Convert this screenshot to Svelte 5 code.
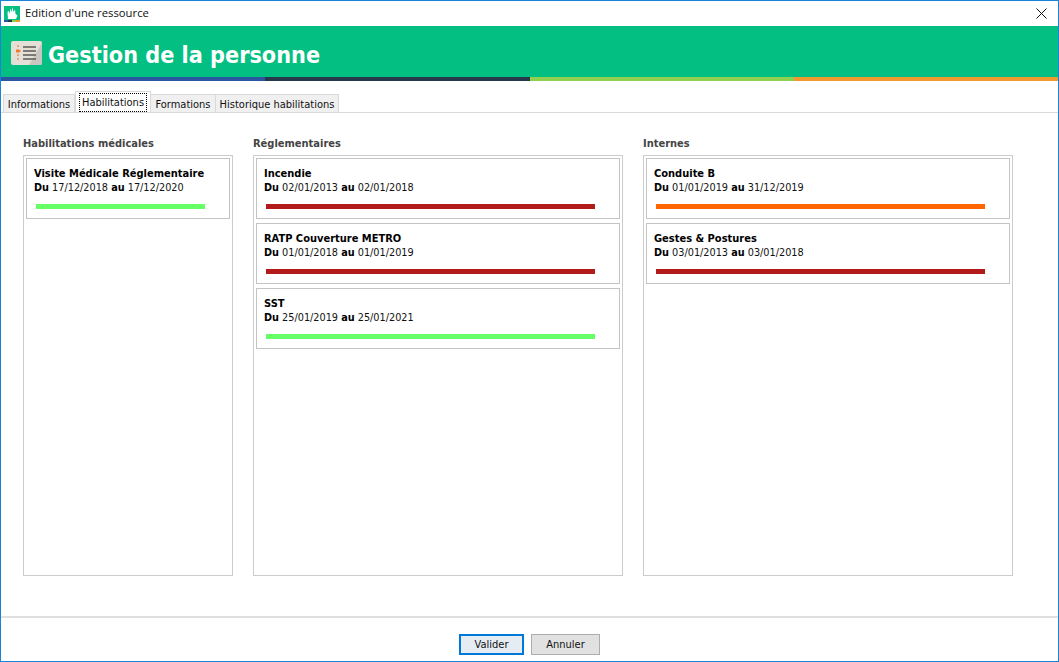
<script>
  const tabs = [
    { label: 'Informations', width: 72 },
    { label: 'Habilitations', width: 76, active: true },
    { label: 'Formations', width: 65 },
    { label: 'Historique habilitations', width: 123 }
  ]

  const columns = [
    {
      title: 'Habilitations médicales',
      items: [{ name: 'Visite Médicale Réglementaire', from: '17/12/2018', to: '17/12/2020', tone: 'ok' }]
    },
    {
      title: 'Réglementaires',
      items: [
        { name: 'Incendie', from: '02/01/2013', to: '02/01/2018', tone: 'expired' },
        { name: 'RATP Couverture METRO', from: '01/01/2018', to: '01/01/2019', tone: 'expired' },
        { name: 'SST', from: '25/01/2019', to: '25/01/2021', tone: 'ok' }
      ]
    },
    {
      title: 'Internes',
      items: [
        { name: 'Conduite B', from: '01/01/2019', to: '31/12/2019', tone: 'soon' },
        { name: 'Gestes & Postures', from: '03/01/2013', to: '03/01/2018', tone: 'expired' }
      ]
    }
  ]
</script>

<div class="window">
  <header class="titlebar">
    <svg class="app-icon" width="16" height="16" viewBox="0 0 16 16" aria-hidden="true">
      <rect width="16" height="16" fill="#04bf82" />
      <path d="M4 13L3.500 6 5 5l.5 3L6.500 2.500 7.500 6 8.500 1l1 5 1.500-2.500.5 4.500 2 1.500-1.500 3.500z" fill="#fff" />
      <rect y="14" width="4" height="2" fill="#2a55a0" />
      <rect x="4" y="14" width="4" height="2" fill="#25394b" />
      <rect x="8" y="14" width="4" height="2" fill="#8fd14f" />
      <rect x="12" y="14" width="4" height="2" fill="#f0992e" />
    </svg>
    <span class="window-title">Edition d'une ressource</span>
    <svg class="close" width="11" height="11" viewBox="0 0 11 11" aria-hidden="true">
      <path d="M.5.5l10 10M10.5.5l-10 10" stroke="#111" stroke-width="1" fill="none" />
    </svg>
  </header>

  <section class="banner">
    <div class="banner-icon">
      <svg width="31" height="24" viewBox="0 0 31 24" aria-hidden="true">
        <rect width="31" height="24" rx="2" fill="#e4e0d8" />
        <path d="M31 2v20a2 2 0 0 1-2 2H18z" fill="#c8c6c0" />
        <path d="M5 8.500h3l2 1.500-2 1.500H5z" fill="#ee7a2c" />
        <path d="M7 4v2M7 13v2M7 17v2" stroke="#e9a67a" stroke-width="2" />
        <path d="M12 6h13M12 10h13M12 14h13M12 18h13" stroke="#5a5a55" stroke-width="1.300" />
      </svg>
    </div>
    <h1>Gestion de la personne</h1>
  </section>
  <div class="stripe">
    <span class="blue"></span><span class="navy"></span><span class="lime"></span><span class="orange"></span>
  </div>

  <nav class="tabs">
    {#each tabs as tab}
      <button class="tab" class:active={tab.active} style:width="{tab.width}px">
        <span>{tab.label}</span>
      </button>
    {/each}
  </nav>

  <main class="content">
    {#each columns as col}
      <section class="column">
        <h2>{col.title}</h2>
        <div class="panel">
          {#each col.items as item}
            <article class="card">
              <h3>{item.name}</h3>
              <p><b>Du</b> {item.from} <b>au</b> {item.to}</p>
              <div class="bar {item.tone}"></div>
            </article>
          {/each}
        </div>
      </section>
    {/each}
  </main>

  <footer class="footer">
    <button class="btn primary">Valider</button>
    <button class="btn">Annuler</button>
  </footer>
</div>

<style>
  :global(body) {
    margin: 0;
    background: #fff;
  }

  .window {
    box-sizing: border-box;
    width: 1059px;
    height: 662px;
    display: flex;
    flex-direction: column;
    border: 1px solid #1883d7;
    background: #fff;
    font-family: "DejaVu Sans Condensed", "DejaVu Sans", sans-serif;
    font-size: 11px;
    color: #000;
    overflow: hidden;
  }

  .titlebar {
    height: 25px;
    flex-shrink: 0;
    box-sizing: border-box;
    display: flex;
    align-items: center;
    padding: 0 11px 0 3px;
    gap: 5px;
  }

  .window-title {
    font-family: "Open Sans", sans-serif;
    font-size: 11.3px;
    line-height: 14px;
    margin-top: -2px;
    color: #111;
  }

  .close {
    margin-left: auto;
  }

  .banner {
    height: 51px;
    flex-shrink: 0;
    box-sizing: border-box;
    display: flex;
    align-items: center;
    gap: 6px;
    padding: 5px 0 0 10px;
    background: #04bf82;
  }

  .banner-icon {
    display: flex;
    margin-top: -3px;
  }

  h1 {
    margin: 0;
    font-size: 23.2px;
    font-weight: 700;
    color: #fff;
  }

  .stripe {
    height: 4px;
    flex-shrink: 0;
    display: grid;
    grid-template-columns: repeat(4, 1fr);
  }

  .blue { background: #2a55a0; }
  .navy { background: #25394b; }
  .lime { background: #8fd14f; }
  .orange { background: #f0992e; }

  .tabs {
    height: 31px;
    flex-shrink: 0;
    display: flex;
    align-items: flex-end;
    padding-left: 2px;
    border-bottom: 1px solid #d9d9d9;
  }

  .tab {
    box-sizing: border-box;
    height: 18px;
    padding: 1px 0 0;
    border: 1px solid #d9d9d9;
    border-bottom: 0;
    background: #f0f0f0;
    font: inherit;
    color: #111;
  }

  .tab + .tab {
    border-left: 0;
  }

  .tab.active {
    height: 21px;
    border-left: 1px solid #d9d9d9;
    background: #fff;
    padding: 1px 0 0;
  }

  .tab.active span {
    outline: 1px dotted #000;
    padding: 2px 2px;
  }

  .content {
    flex: 1;
    display: grid;
    grid-template-columns: 210px 370px 370px;
    column-gap: 20px;
    align-content: start;
    padding: 24px 0 0 22px;
    border-bottom: 2px solid #e0e0e0;
  }

  .column h2 {
    margin: 0 0 4px;
    height: 14px;
    line-height: 14px;
    font-size: 11px;
    font-weight: 700;
    color: #444;
  }

  .panel {
    box-sizing: border-box;
    height: 421px;
    display: flex;
    flex-direction: column;
    gap: 4px;
    padding: 2px;
    border: 1px solid #ccc;
  }

  .card {
    box-sizing: border-box;
    height: 61px;
    padding: 8px 7px 0;
    border: 1px solid #c4c4c4;
  }

  .card h3 {
    margin: 0;
    font-size: 11px;
    line-height: 14px;
    font-weight: 700;
    color: #000;
  }

  .card p {
    margin: 0;
    line-height: 14px;
    font-size: 10.8px;
    color: #111;
  }

  .card b {
    color: #000;
  }

  .bar {
    height: 5px;
    margin: 9px 0 0 2px;
    width: calc(100% - 19px);
  }

  .bar.ok { background: #66ff66; }
  .bar.expired { background: #b31b1b; }
  .bar.soon { background: #ff6600; }

  .footer {
    height: 43px;
    flex-shrink: 0;
    display: flex;
    justify-content: center;
    gap: 7px;
    padding-top: 16px;
    box-sizing: border-box;
  }

  .btn {
    box-sizing: border-box;
    width: 69px;
    height: 21px;
    padding: 0;
    border: 1px solid #adadad;
    background: #e1e1e1;
    font: inherit;
    color: #111;
  }

  .btn.primary {
    width: 65px;
    border: 2px solid #0078d7;
    background: #e5ecf4;
  }
</style>
